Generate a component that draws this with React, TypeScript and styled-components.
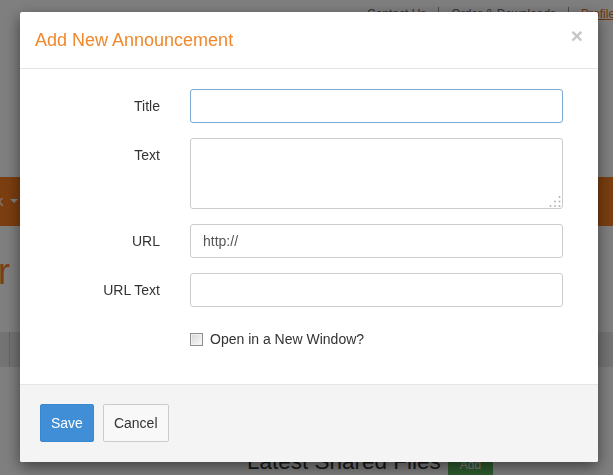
import React from "react";
import styled, { createGlobalStyle } from "styled-components";

const GlobalStyle = createGlobalStyle`
  html, body { margin: 0; padding: 0; background: #fff; }
  body {
    font-family: "Liberation Sans", Arial, sans-serif;
    font-size: 14px;
    color: #333;
    overflow: hidden;
  }
  * { box-sizing: border-box; }
`;

/* ---------- background page ---------- */

const Page = styled.div`
  width: 613px;
  height: 475px;
  overflow: hidden;
  display: flex;
  flex-direction: column;
`;

const TopLinks = styled.div`
  height: 30px;
  padding: 7px 0 0 355px;
  display: flex;
  font-size: 12px;
  line-height: 14px;
  white-space: nowrap;
  color: #666;
`;

const TopLink = styled.span<{ $active?: boolean; $first?: boolean }>`
  padding: 0 12px;
  border-left: ${(p) => (p.$first ? "none" : "1px solid #999")};
  color: ${(p) => (p.$active ? "#e07020" : "#666")};
  text-decoration: ${(p) => (p.$active ? "underline" : "none")};
`;

const Masthead = styled.div`
  height: 148px;
`;

const NavBar = styled.div`
  height: 50px;
  background: #f77c22;
  display: flex;
  align-items: center;
  overflow: hidden;
`;

const NavList = styled.div`
  display: flex;
  gap: 30px;
  margin-left: -48px;
  white-space: nowrap;
`;

const NavItem = styled.span`
  display: inline-flex;
  align-items: center;
  gap: 7px;
  color: #fff;
  font-size: 14px;
`;

const Caret = styled.span`
  width: 0;
  height: 0;
  border-left: 4px solid transparent;
  border-right: 4px solid transparent;
  border-top: 4px solid #fff;
`;

const PageTitle = styled.h1`
  margin: 26px 0 0 -240px;
  font-size: 36px;
  line-height: 40px;
  font-weight: normal;
  color: #f37d2c;
  white-space: nowrap;
`;

const TabBar = styled.div`
  margin-top: 40px;
  height: 35px;
  display: flex;
  background: #e8e8e8;
  overflow: hidden;
`;

const Tab = styled.span<{ $width: number }>`
  flex: 0 0 ${(p) => p.$width}px;
  border-right: 1px solid #c8c8c8;
`;

const LatestSection = styled.div`
  margin-top: 82px;
  padding-left: 247px;
  display: flex;
  align-items: baseline;
  gap: 7px;
  white-space: nowrap;
`;

const SectionHeading = styled.h3`
  margin: 0;
  font-size: 22.5px;
  line-height: 25px;
  font-weight: normal;
  color: #333;
`;

const AddLabel = styled.span`
  display: inline-block;
  padding: 3px 12px;
  font-size: 12px;
  background: #5cb85c;
  color: #fff;
`;

/* ---------- modal ---------- */

const Backdrop = styled.div`
  position: fixed;
  inset: 0;
  background: rgba(0, 0, 0, 0.5);
`;

const Dialog = styled.div`
  position: fixed;
  top: 12px;
  left: 20px;
  width: 578px;
  background: #fff;
  border-radius: 2px;
  box-shadow: 0 5px 15px rgba(0, 0, 0, 0.5);
  overflow: hidden;
`;

const Header = styled.div`
  padding: 15px;
  border-bottom: 1px solid #e5e5e5;
  display: flex;
  justify-content: space-between;
  align-items: flex-start;
`;

const Title = styled.h4`
  margin: 0;
  font-size: 18px;
  line-height: 26px;
  font-weight: normal;
  color: #f0882d;
`;

const Close = styled.button`
  margin-top: -2px;
  padding: 0;
  border: 0;
  background: none;
  font-family: "Liberation Sans", Arial, sans-serif;
  font-size: 21px;
  font-weight: bold;
  line-height: 1;
  color: #c6c6c6;
  cursor: pointer;
`;

const Body = styled.div`
  padding: 20px 35px;
`;

const FormGrid = styled.div`
  display: grid;
  grid-template-columns: 105px 373px;
  column-gap: 30px;
  row-gap: 15px;
  padding-bottom: 15px;
`;

const Label = styled.label`
  text-align: right;
  padding-top: 7px;
  line-height: 20px;
  color: #333;
`;

const Input = styled.input<{ $focused?: boolean }>`
  display: block;
  width: 100%;
  height: 34px;
  padding: 6px 12px;
  font-family: "Liberation Sans", Arial, sans-serif;
  font-size: 14px;
  color: #555;
  background: #fff;
  border: 1px solid ${(p) => (p.$focused ? "#7aa9d4" : "#ccc")};
  border-radius: 3px;
  outline: none;
`;

const TextAreaWrap = styled.div`
  position: relative;
  height: 71px;
`;

const TextArea = styled.textarea`
  display: block;
  width: 100%;
  height: 100%;
  padding: 6px 12px;
  font-family: "Liberation Sans", Arial, sans-serif;
  font-size: 14px;
  color: #555;
  border: 1px solid #ccc;
  border-radius: 3px;
  resize: none;
  outline: none;
`;

const Grip = styled.svg`
  position: absolute;
  right: 0;
  bottom: 0;
  width: 16px;
  height: 16px;
  pointer-events: none;
`;

const CheckRow = styled.label`
  grid-column: 2;
  padding-top: 7px;
  display: flex;
  align-items: center;
  gap: 7px;
  line-height: 20px;
  color: #333;
`;

const Check = styled.input`
  appearance: none;
  margin: 0;
  width: 13px;
  height: 13px;
  border: 1px solid #8e8e8e;
  background: linear-gradient(135deg, #d6d6d6, #fafafa);
  box-shadow: inset 0 0 0 1px #f2f2f2;
`;

const Footer = styled.div`
  padding: 19px 20px 20px;
  border-top: 1px solid #e5e5e5;
  background: #f4f4f4;
  display: flex;
  gap: 9px;
`;

const Button = styled.button<{ $primary?: boolean }>`
  height: 38px;
  padding: 0 10px;
  font-family: "Liberation Sans", Arial, sans-serif;
  font-size: 14px;
  line-height: 20px;
  border-radius: 2px;
  border: 1px solid ${(p) => (p.$primary ? "#3a88cf" : "#cbcbcb")};
  background: ${(p) => (p.$primary ? "#3f8ed6" : "#f8f8f8")};
  color: ${(p) => (p.$primary ? "#fff" : "#333")};
  cursor: pointer;
`;

const gripDots: [number, number][] = [
  [12.5, 4],
  [8, 8.5],
  [12.5, 8.5],
  [3.5, 13],
  [8, 13],
  [12.5, 13],
];

export default function App() {
  return (
    <>
      <GlobalStyle />
      <Page>
        <TopLinks>
          <TopLink $first>Contact Us</TopLink>
          <TopLink>Order &amp; Downloads</TopLink>
          <TopLink $active>Profile</TopLink>
        </TopLinks>
        <Masthead />
        <NavBar>
          <NavList>
            <NavItem>
              Network <Caret />
            </NavItem>
            <NavItem>Resources</NavItem>
            <NavItem>Support</NavItem>
            <NavItem>Training</NavItem>
          </NavList>
        </NavBar>
        <PageTitle>Member Center</PageTitle>
        <TabBar>
          <Tab $width={10} />
          <Tab $width={120} />
          <Tab $width={120} />
        </TabBar>
        <LatestSection>
          <SectionHeading>Latest Shared Files</SectionHeading>
          <AddLabel>Add</AddLabel>
        </LatestSection>
      </Page>

      <Backdrop />
      <Dialog role="dialog">
        <Header>
          <Title>Add New Announcement</Title>
          <Close aria-label="Close">×</Close>
        </Header>
        <Body>
          <FormGrid>
            <Label htmlFor="ann-title">Title</Label>
            <Input id="ann-title" type="text" $focused />

            <Label htmlFor="ann-text">Text</Label>
            <TextAreaWrap>
              <TextArea id="ann-text" />
              <Grip viewBox="0 0 16 16">
                {gripDots.map(([x, y]) => (
                  <rect key={`${x}-${y}`} x={x - 0.8} y={y - 0.8} width={1.6} height={1.6} fill="#a9a9a9" />
                ))}
              </Grip>
            </TextAreaWrap>

            <Label htmlFor="ann-url">URL</Label>
            <Input id="ann-url" type="text" defaultValue="http://" />

            <Label htmlFor="ann-urltext">URL Text</Label>
            <Input id="ann-urltext" type="text" />

            <CheckRow>
              <Check type="checkbox" />
              Open in a New Window?
            </CheckRow>
          </FormGrid>
        </Body>
        <Footer>
          <Button $primary>Save</Button>
          <Button>Cancel</Button>
        </Footer>
      </Dialog>
    </>
  );
}
